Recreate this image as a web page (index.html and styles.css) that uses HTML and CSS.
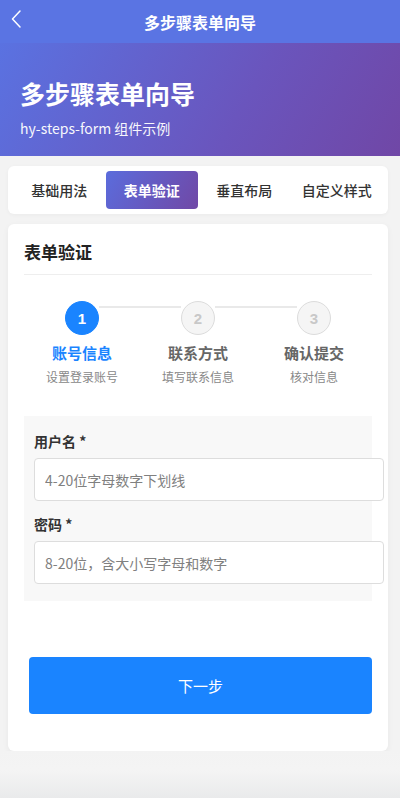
FILE: index.html
```html
<!DOCTYPE html>
<html lang="zh-CN">
<head>
  <meta charset="UTF-8" />
  <meta name="viewport" content="width=device-width, initial-scale=1.0" />
  <title>多步骤表单向导</title>
  <link rel="stylesheet" href="styles.css">
</head>
<body>
  <div class="navbar">
    <span class="nav-back">
      <svg width="14" height="20" viewBox="0 0 14 20"><path d="M9 2 L1.5 10 L9 18" fill="none" stroke="#fff" stroke-width="1.5" stroke-linecap="round" stroke-linejoin="round"/></svg>
    </span>
    <div class="nav-title">多步骤表单向导</div>
  </div>

  <div class="hero">
    <h1>多步骤表单向导</h1>
    <p>hy-steps-form 组件示例</p>
  </div>

  <div class="tabs">
    <div class="tab">基础用法</div>
    <div class="tab active">表单验证</div>
    <div class="tab">垂直布局</div>
    <div class="tab">自定义样式</div>
  </div>

  <div class="card">
    <div class="card-title">表单验证</div>

    <div class="steps">
      <div class="step active">
        <div class="step-dot">1</div>
        <div class="step-name">账号信息</div>
        <div class="step-desc">设置登录账号</div>
      </div>
      <div class="step">
        <div class="step-dot">2</div>
        <div class="step-name">联系方式</div>
        <div class="step-desc">填写联系信息</div>
      </div>
      <div class="step last">
        <div class="step-dot">3</div>
        <div class="step-name">确认提交</div>
        <div class="step-desc">核对信息</div>
      </div>
    </div>

    <div class="form">
      <div class="field">
        <label>用户名 *</label>
        <input type="text" placeholder="4-20位字母数字下划线">
      </div>
      <div class="field">
        <label>密码 *</label>
        <input type="password" placeholder="8-20位，含大小写字母和数字">
      </div>
    </div>

    <button class="btn-next">下一步</button>
  </div>

  <div class="bottom-bar"></div>
</body>
</html>
```

FILE: styles.css
```css
* {
  box-sizing: border-box;
}
body {
  margin: 0;
  background: #f3f3f3;
  font-family: "Noto Sans CJK SC", "Liberation Sans", sans-serif;
  color: #333;
}
.navbar {
  height: 43px;
  background: #5a74e3;
  display: flex;
  align-items: center;
  justify-content: center;
  position: relative;
}
.nav-back {
  position: absolute;
  left: 11px;
  top: 9px;
}
.nav-title {
  color: #fff;
  font-size: 16px;
  font-weight: bold;
}
.hero {
  height: 113px;
  background: linear-gradient(120deg, #5a72e1 0%, #6a55bd 60%, #7047a6 100%);
  padding: 33px 20px 0;
  color: #fff;
}
.hero h1 {
  margin: 0;
  font-size: 25px;
  line-height: 34px;
  font-weight: bold;
}
.hero p {
  margin: 8px 0 0;
  font-size: 14px;
  line-height: 20px;
  opacity: 0.95;
}
.tabs {
  margin: 10px 12px 0 8px;
  background: #fff;
  border-radius: 6px;
  padding: 5px;
  height: 48px;
  display: grid;
  grid-template-columns: repeat(4, 1fr);
  box-shadow: 0 1px 4px rgba(0,0,0,0.04);
}
.tab {
  height: 38px;
  display: flex;
  align-items: center;
  justify-content: center;
  font-size: 14px;
  font-weight: 500;
  color: #333;
  border-radius: 4px;
}
.tab.active {
  background: linear-gradient(120deg, #5b6cdc, #7048a6);
  color: #fff;
  font-weight: bold;
}
.card {
  margin: 10px 12px 0 8px;
  background: #fff;
  border-radius: 6px;
  padding: 16px;
  box-shadow: 0 2px 6px rgba(0,0,0,0.05);
}
.card-title {
  font-size: 17px;
  font-weight: bold;
  line-height: 24px;
  padding-bottom: 10px;
  border-bottom: 1px solid #eee;
  color: #222;
}
.steps {
  margin-top: 26px;
  display: grid;
  grid-template-columns: repeat(3, minmax(0, 1fr));
}
.step {
  position: relative;
  display: flex;
  flex-direction: column;
  align-items: center;
}
.step::after {
  content: "";
  position: absolute;
  top: 5px;
  left: calc(50% + 17px);
  width: calc(100% - 34px);
  height: 2px;
  background: #e9e9e9;
}
.step.last::after {
  display: none;
}
.step-dot {
  width: 34px;
  height: 34px;
  border-radius: 50%;
  background: #f5f5f5;
  border: 1px solid #dcdcdc;
  color: #c8c8c8;
  font-family: "Liberation Sans", sans-serif;
  font-weight: bold;
  font-size: 15px;
  display: flex;
  align-items: center;
  justify-content: center;
}
.step.active .step-dot {
  background: #1a84ff;
  border-color: #1a84ff;
  color: #fff;
}
.step-name {
  margin-top: 8px;
  font-size: 15px;
  line-height: 20px;
  font-weight: bold;
  color: #666;
}
.step.active .step-name {
  color: #1a84ff;
}
.step-desc {
  margin-top: 6px;
  font-size: 12px;
  line-height: 16px;
  color: #888;
}
.form {
  margin-top: 31px;
  background: #f8f8f8;
  padding: 15px 10px 17px;
}
.field + .field {
  margin-top: 13px;
}
.field label {
  display: block;
  font-size: 14px;
  font-weight: bold;
  line-height: 20px;
  color: #333;
  margin-bottom: 7px;
}
.field input {
  display: block;
  box-sizing: border-box;
  width: calc(100% + 22px);
  height: 43px;
  padding: 0 10px;
  border: 1px solid #ddd;
  border-radius: 4px;
  background: #fff;
  font-family: "Noto Sans CJK SC", "Liberation Sans", sans-serif;
  font-size: 14px;
  color: #333;
  outline: none;
}
.field input::placeholder {
  color: #808080;
}
.btn-next {
  display: block;
  margin: 56px 0 21px 5px;
  width: 343px;
  height: 57px;
  border: none;
  border-radius: 4px;
  background: #1a84ff;
  color: #fff;
  font-family: "Noto Sans CJK SC", "Liberation Sans", sans-serif;
  font-size: 15px;
}
.bottom-bar {
  height: 48px;
  background: linear-gradient(#f3f3f3 0%, #f4f4f4 40%, #e9eaeb 100%);
}
```
